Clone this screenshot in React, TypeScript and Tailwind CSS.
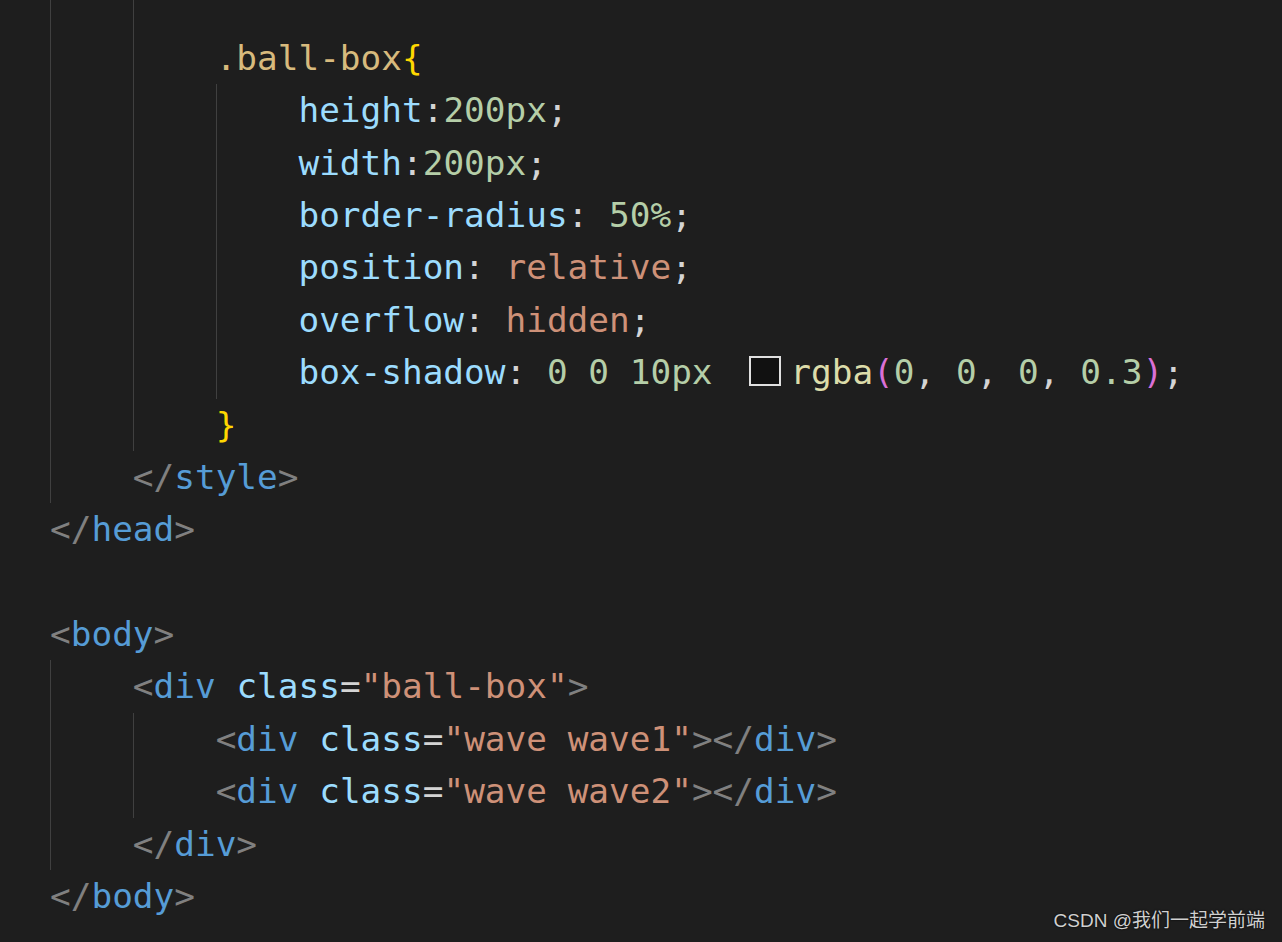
import React from "react";

type Tok = [string, string];

const C = {
  sel: "text-[#d7ba7d]",
  brace: "text-[#ffd700]",
  prop: "text-[#9cdcfe]",
  punc: "text-[#d4d4d4]",
  num: "text-[#b5cea8]",
  str: "text-[#ce9178]",
  fn: "text-[#dcdcaa]",
  paren: "text-[#da70d6]",
  br: "text-[#808080]",
  tag: "text-[#569cd6]",
  attr: "text-[#9cdcfe]",
};

function Guide() {
  return <span className="w-[4ch] shrink-0 self-stretch border-l border-[#404040]" />;
}

function Row({ level, children, h = "h-[52.4px]" }: { level: number; children?: React.ReactNode; h?: string }) {
  return (
    <div className={`flex items-start ${h}`}>
      {Array.from({ length: level }).map((_, i) => (
        <Guide key={i} />
      ))}
      <span className="whitespace-pre leading-[53px]">{children}</span>
    </div>
  );
}

function Toks({ t }: { t: Tok[] }) {
  return (
    <>
      {t.map(([cls, s], i) => (
        <span key={i} className={cls}>
          {s}
        </span>
      ))}
    </>
  );
}

export default function App() {
  return (
    <div className="relative h-[942px] w-full overflow-hidden bg-[#1e1e1e]">
      <div
        className="pl-[50px] text-[34.4px] text-[#d4d4d4]"
        style={{ fontFamily: '"DejaVu Sans Mono", "Liberation Mono", monospace' }}
      >
        <Row level={2} h="h-[31.8px]" />
        <Row level={2}>
          <Toks t={[[C.sel, ".ball-box"], [C.brace, "{"]]} />
        </Row>
        <Row level={3}>
          <Toks t={[[C.prop, "height"], [C.punc, ":"], [C.num, "200px"], [C.punc, ";"]]} />
        </Row>
        <Row level={3}>
          <Toks t={[[C.prop, "width"], [C.punc, ":"], [C.num, "200px"], [C.punc, ";"]]} />
        </Row>
        <Row level={3}>
          <Toks t={[[C.prop, "border-radius"], [C.punc, ": "], [C.num, "50%"], [C.punc, ";"]]} />
        </Row>
        <Row level={3}>
          <Toks t={[[C.prop, "position"], [C.punc, ": "], [C.str, "relative"], [C.punc, ";"]]} />
        </Row>
        <Row level={3}>
          <Toks t={[[C.prop, "overflow"], [C.punc, ": "], [C.str, "hidden"], [C.punc, ";"]]} />
        </Row>
        <Row level={3}>
          <Toks t={[[C.prop, "box-shadow"], [C.punc, ": "], [C.num, "0 0 10px"], [C.punc, " "]]} />
          <span className="ml-[16px] mr-[9px] inline-block h-[30px] w-[32px] border-2 border-[#e0e0e0] bg-[#111111] align-[-2px]" />
          <Toks
            t={[
              [C.fn, "rgba"],
              [C.paren, "("],
              [C.num, "0"],
              [C.punc, ", "],
              [C.num, "0"],
              [C.punc, ", "],
              [C.num, "0"],
              [C.punc, ", "],
              [C.num, "0.3"],
              [C.paren, ")"],
              [C.punc, ";"],
            ]}
          />
        </Row>
        <Row level={2}>
          <Toks t={[[C.brace, "}"]]} />
        </Row>
        <Row level={1}>
          <Toks t={[[C.br, "</"], [C.tag, "style"], [C.br, ">"]]} />
        </Row>
        <Row level={0}>
          <Toks t={[[C.br, "</"], [C.tag, "head"], [C.br, ">"]]} />
        </Row>
        <Row level={0} />
        <Row level={0}>
          <Toks t={[[C.br, "<"], [C.tag, "body"], [C.br, ">"]]} />
        </Row>
        <Row level={1}>
          <Toks
            t={[
              [C.br, "<"],
              [C.tag, "div"],
              [C.punc, " "],
              [C.attr, "class"],
              [C.punc, "="],
              [C.str, '"ball-box"'],
              [C.br, ">"],
            ]}
          />
        </Row>
        <Row level={2}>
          <Toks
            t={[
              [C.br, "<"],
              [C.tag, "div"],
              [C.punc, " "],
              [C.attr, "class"],
              [C.punc, "="],
              [C.str, '"wave wave1"'],
              [C.br, "></"],
              [C.tag, "div"],
              [C.br, ">"],
            ]}
          />
        </Row>
        <Row level={2}>
          <Toks
            t={[
              [C.br, "<"],
              [C.tag, "div"],
              [C.punc, " "],
              [C.attr, "class"],
              [C.punc, "="],
              [C.str, '"wave wave2"'],
              [C.br, "></"],
              [C.tag, "div"],
              [C.br, ">"],
            ]}
          />
        </Row>
        <Row level={1}>
          <Toks t={[[C.br, "</"], [C.tag, "div"], [C.br, ">"]]} />
        </Row>
        <Row level={0}>
          <Toks t={[[C.br, "</"], [C.tag, "body"], [C.br, ">"]]} />
        </Row>
      </div>
      <div
        className="absolute bottom-[10px] right-[17px] text-[19px] leading-[22px] text-[#d0d0d0] [text-shadow:0_0_2px_#000]"
        style={{ fontFamily: '"Liberation Sans", "Noto Sans CJK SC", sans-serif' }}
      >
        CSDN @我们一起学前端
      </div>
    </div>
  );
}
